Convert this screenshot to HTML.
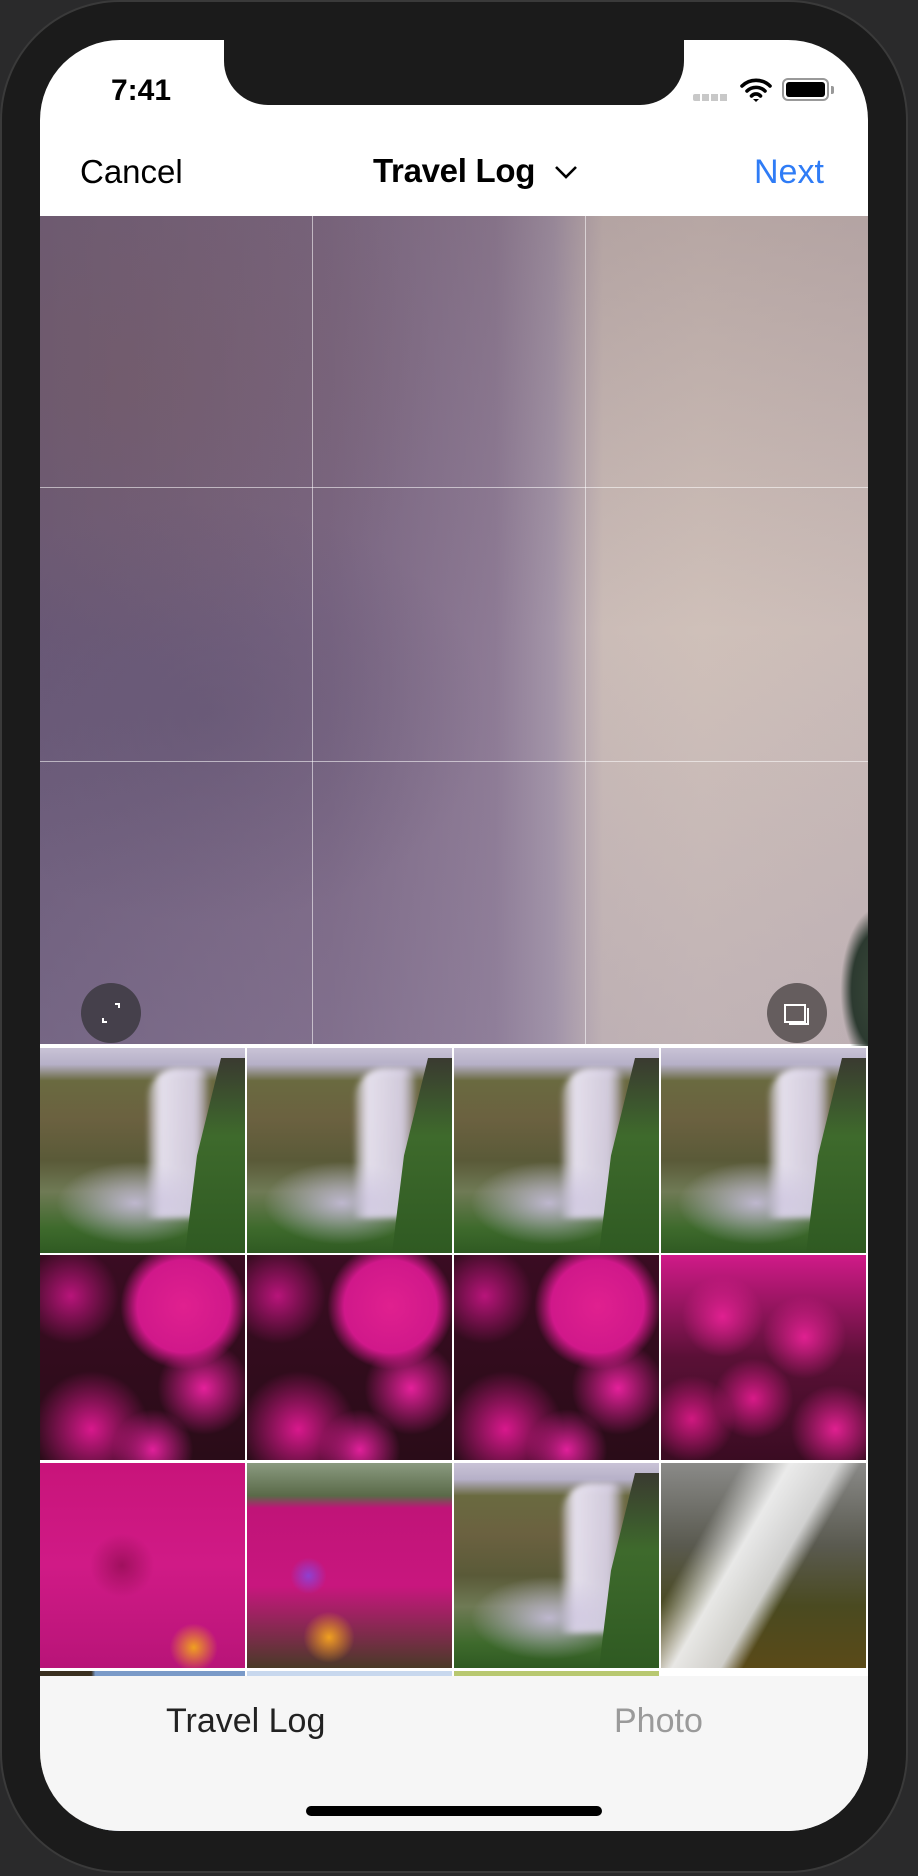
<!DOCTYPE html>
<html><head><meta charset="utf-8"><style>
*{margin:0;padding:0;box-sizing:border-box}
html,body{width:918px;height:1876px;overflow:hidden;background:#2a2a2b;font-family:"Liberation Sans",sans-serif}
.phone{position:absolute;left:0;top:0;width:908px;height:1873px;background:#1b1b1b;border-radius:120px;border:2px solid #3a3a3a}
.screen{position:absolute;left:40px;top:40px;width:828px;height:1791px;background:#fff;border-radius:80px;overflow:hidden}
.notch{position:absolute;left:184px;top:-2px;width:460px;height:67px;background:#1b1b1b;border-radius:0 0 44px 44px}
.t{position:absolute;white-space:nowrap}
.crop{position:absolute;left:0;top:176px;width:828px;height:828px;background:
 radial-gradient(ellipse at 10% 20%,rgba(120,90,90,.35),transparent 30%),
 radial-gradient(ellipse at 20% 60%,rgba(80,70,100,.3),transparent 30%),
 linear-gradient(180deg,rgba(110,90,100,.25),transparent 50%,rgba(150,140,170,.25)),
 linear-gradient(90deg,#6b5a78 0%,#7a6683 35%,#8d7a94 55%,#a495a8 62%,#bfb0b3 66%,#cbbcb7 68%,#cfc0b9 80%,#cbbcb8 100%)}
.crop .l{position:absolute;background:rgba(255,255,255,.55)}
.btn{position:absolute;width:60px;height:60px;border-radius:50%}
.grid{position:absolute;left:0;top:1008px;width:828px}
.th{position:absolute;width:205px;height:205px;overflow:hidden}
.fall{position:absolute;left:108px;top:20px;width:60px;height:150px;background:linear-gradient(90deg,rgba(225,220,240,.3),rgba(235,230,245,.95) 20%,rgba(220,212,235,.9) 80%,rgba(200,190,220,.3));border-radius:30px 10px 0 0;filter:blur(3px)}
.mist{position:absolute;left:10px;top:110px;width:170px;height:90px;background:radial-gradient(ellipse,rgba(200,190,220,.9),transparent 65%)}
.wf{background:
 linear-gradient(180deg,#c9c3d6 0%,#b6b0c8 8%,#6a6a40 16%,#6b6140 35%,#5a5a38 55%,#6f7a55 70%,#3e6a2c 88%,#2f5a22 100%)}
.wf .rc{position:absolute;right:0;top:10px;width:60px;height:195px;background:linear-gradient(180deg,#3a3a30,#3e6a2c 40%,#2f5a22);clip-path:polygon(60% 0,100% 0,100% 100%,0 100%,20% 50%)}
.fl{background:
 radial-gradient(circle at 70% 25%,#e0208f 0,#d0188a 22%,transparent 30%),
 radial-gradient(circle at 80% 65%,#e4209a 0,transparent 22%),
 radial-gradient(circle at 25% 85%,#d8188c 0,transparent 25%),
 radial-gradient(circle at 15% 20%,#b8147a 0,transparent 20%),
 radial-gradient(circle at 55% 95%,#e0209a 0,transparent 18%),
 linear-gradient(180deg,#3a0c22,#2a0c18)}
.fl2{background:
 radial-gradient(circle at 30% 30%,#e02090 0,transparent 20%),
 radial-gradient(circle at 70% 40%,#e02090 0,transparent 22%),
 radial-gradient(circle at 45% 70%,#d81a88 0,transparent 22%),
 radial-gradient(circle at 85% 85%,#e02090 0,transparent 18%),
 radial-gradient(circle at 15% 80%,#d01880 0,transparent 18%),
 linear-gradient(180deg,#d01a88,#5a1036 50%,#3a0c22)}
.fl3{background:
 radial-gradient(circle at 75% 90%,#f0a020 0,transparent 10%),
 radial-gradient(circle at 40% 50%,#a0105e 0,transparent 20%),
 linear-gradient(180deg,#c8147a,#d01a86 50%,#b81478)}
.fl4{background:
 radial-gradient(circle at 40% 85%,#f0a020 0,transparent 12%),
 radial-gradient(circle at 30% 55%,#9040d0 0,transparent 10%),
 linear-gradient(180deg,#8a9a80 0%,#5a6a48 16%,#c01478 22%,#c8167e 60%,#4a3a28 100%)}
.wfb{background:
 linear-gradient(120deg,transparent 25%,rgba(240,240,240,.95) 40%,rgba(220,220,220,.9) 55%,transparent 62%),
 linear-gradient(180deg,#8a8a88,#5a5a50 40%,#4a4a20 70%,#5a4a18)}
</style></head><body>
<div class="phone"></div>
<div class="screen">
 <div class="notch"></div>
 <div class="t" style="left:71px;top:34px;font-size:30px;font-weight:bold;color:#000">7:41</div>
 <div style="position:absolute;left:653px;top:54px;width:36px;height:7px;background:repeating-linear-gradient(90deg,#c8c8c8 0 7px,transparent 7px 9px);border-radius:2px"></div>
 <svg style="position:absolute;left:699px;top:37px" width="34" height="26" viewBox="0 0 34 26"><path d="M3 9a20 20 0 0 1 28 0M8 14a13 13 0 0 1 18 0M12.5 19a6 6 0 0 1 9 0" stroke="#000" stroke-width="3.6" fill="none" stroke-linecap="round"/><path d="M14 22l3 3 3-3z" fill="#000"/></svg>
 <div style="position:absolute;left:742px;top:38px;width:47px;height:23px;border:2px solid #999;border-radius:6px;padding:2px"><div style="width:100%;height:100%;background:#000;border-radius:3px"></div></div>
 <div style="position:absolute;left:791px;top:46px;width:3px;height:8px;background:#999;border-radius:0 2px 2px 0"></div>
 <div class="t" style="left:40px;top:113px;font-size:33px;color:#000">Cancel</div>
 <div class="t" style="left:333px;top:112px;font-size:33px;font-weight:bold;color:#000;letter-spacing:-.3px">Travel Log</div>
 <svg style="position:absolute;left:513px;top:124px" width="26" height="16"><path d="M3 3l10 10 10-10" stroke="#000" stroke-width="2.6" fill="none"/></svg>
 <div class="t" style="left:714px;top:113px;font-size:34px;color:#2f7cf6">Next</div>
 <div class="crop">
  <div class="l" style="left:272px;top:0;width:1px;height:828px"></div>
  <div class="l" style="left:545px;top:0;width:1px;height:828px"></div>
  <div class="l" style="left:0;top:271px;width:828px;height:1px"></div>
  <div class="l" style="left:0;top:545px;width:828px;height:1px"></div>
  <div style="position:absolute;left:800px;top:690px;width:40px;height:140px;background:radial-gradient(ellipse at 100% 60%,#3a4a3a 0,#2c3a30 50%,transparent 70%)"></div>
  <div class="btn" style="left:41px;top:767px;background:#45404b">
   <svg width="60" height="60"><path d="M34 21h4v4M26 39h-4v-4" stroke="#fff" stroke-width="2" fill="none"/></svg>
  </div>
  <div class="btn" style="left:727px;top:767px;background:#655d5e">
   <svg width="60" height="60"><rect x="18" y="22" width="20" height="17" stroke="#fff" stroke-width="2" fill="none"/><path d="M41 25v16H22" stroke="#fff" stroke-width="2" fill="none"/></svg>
  </div>
 </div>
 <div class="grid">
  <div class="th wf" style="left:0;top:0"><div class="fall"></div><div class="mist"></div><div class="rc"></div></div>
  <div class="th wf" style="left:207px;top:0"><div class="fall"></div><div class="mist"></div><div class="rc"></div></div>
  <div class="th wf" style="left:414px;top:0"><div class="fall"></div><div class="mist"></div><div class="rc"></div></div>
  <div class="th wf" style="left:621px;top:0"><div class="fall"></div><div class="mist"></div><div class="rc"></div></div>
  <div class="th fl" style="left:0;top:207px"></div>
  <div class="th fl" style="left:207px;top:207px"></div>
  <div class="th fl" style="left:414px;top:207px"></div>
  <div class="th fl2" style="left:621px;top:207px"></div>
  <div class="th fl3" style="left:0;top:415px"></div>
  <div class="th fl4" style="left:207px;top:415px"></div>
  <div class="th wf" style="left:414px;top:415px"><div class="fall"></div><div class="mist"></div><div class="rc"></div></div>
  <div class="th wfb" style="left:621px;top:415px"></div>
  <div class="th" style="left:0;top:623px;background:linear-gradient(90deg,#3a3020 25%,#7a9ac8 27%)"></div>
  <div class="th" style="left:207px;top:623px;background:#c8d8ee"></div>
  <div class="th" style="left:414px;top:623px;background:#b8c870"></div>
 </div>
 <div style="position:absolute;left:0;top:1636px;width:828px;height:160px;background:#f6f6f6"></div>
 <div class="t" style="left:126px;top:1662px;font-size:34px;color:#222">Travel Log</div>
 <div class="t" style="left:574px;top:1662px;font-size:34px;color:#9a9a9a">Photo</div>
 <div style="position:absolute;left:266px;top:1766px;width:296px;height:10px;background:#000;border-radius:5px"></div>
</div>
</body></html>
